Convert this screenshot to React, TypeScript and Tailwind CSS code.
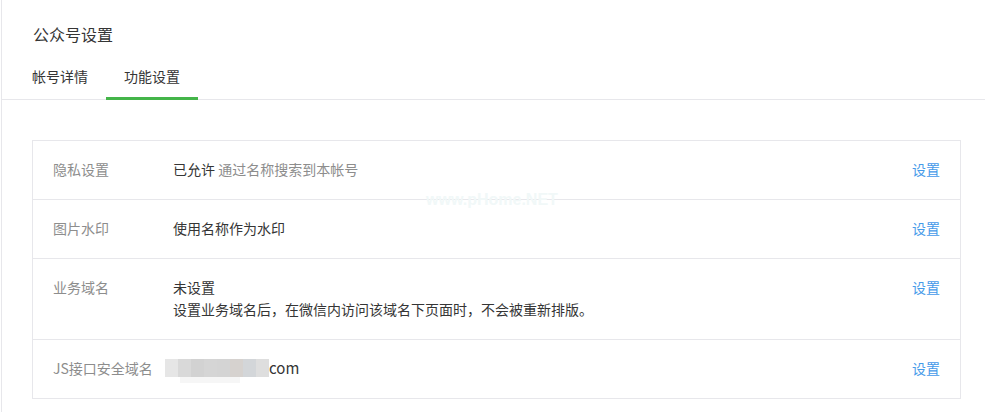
import React from "react";

const font = { fontFamily: '"Microsoft YaHei", "Noto Sans CJK SC", "Noto Sans", sans-serif' };

function Row({ label, children }: { label: string; children: React.ReactNode }) {
  return (
    <div className="flex items-start border-t border-[#e7e7eb] first:border-t-0 pt-[17px] pb-[19px] pl-5 pr-5 text-[14px] leading-[22px]">
      <div className="w-[120px] shrink-0 text-[#8d8d8d]">{label}</div>
      <div className="flex-1 text-[#353535]">{children}</div>
      <a className="text-[#459ae9] shrink-0 cursor-pointer">设置</a>
    </div>
  );
}

export default function App() {
  const blur = ["#e6e6e6", "#d9d9d9", "#d2d2d2", "#d5d5d5", "#d4d4d4", "#d6d2cf", "#d3d6d9", "#dedede"];
  return (
    <div className="relative w-[985px] h-[412px] bg-white overflow-hidden" style={font}>
      <div className="ml-px h-full border-l border-[#e7e7eb]">
        <div className="pt-[23px] pl-[31px] text-[16px] leading-[22px] text-[#353535]">公众号设置</div>
        <div className="mt-[20px] flex border-b border-[#e7e7eb] pl-[30px] text-[14px] text-[#353535]">
          <div className="pr-[18px] pb-[12px] leading-[22px]">帐号详情</div>
          <div className="relative px-[18px] pb-[12px] leading-[22px]">
            功能设置
            <div className="absolute left-0 right-0 bottom-[-1px] h-[3px] bg-[#44b549]" />
          </div>
        </div>
        <div className="mt-10 ml-[30px] w-[929px] border border-[#e7e7eb]">
          <Row label="隐私设置">
            已允许 <span className="text-[#8d8d8d]">通过名称搜索到本帐号</span>
          </Row>
          <Row label="图片水印">使用名称作为水印</Row>
          <Row label="业务域名">
            <div>未设置</div>
            <div>设置业务域名后，在微信内访问该域名下页面时，不会被重新排版。</div>
          </Row>
          <Row label="JS接口安全域名">
            <div className="flex items-center -ml-2">
              <div className="relative flex h-[18px]">
                {blur.map((c, i) => (
                  <div key={i} className="w-[13px] h-[18px]" style={{ backgroundColor: c }} />
                ))}
                <div className="absolute left-[15px] top-[18px] w-[60px] h-[6px] bg-[#f6f6f6]" />
              </div>
              <span className="text-[15px]">com</span>
            </div>
          </Row>
        </div>
      </div>
      <div className="absolute left-[426px] top-[188px] text-[16px] font-bold text-[#f1f8f8] pointer-events-none" style={{ fontFamily: '"Liberation Sans", sans-serif' }}>
        www.pHome.NET
      </div>
    </div>
  );
}
